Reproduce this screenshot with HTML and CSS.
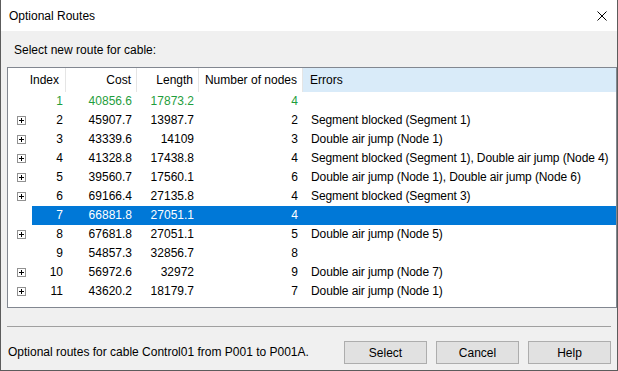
FILE: index.html
```html
<!DOCTYPE html>
<html lang="en">
<head>
    <meta charset="UTF-8">
    <title>Optional Routes</title>
    <link rel="stylesheet" href="styles.css">
</head>
<body>
<div class="window">
    <div class="titlebar">
        <span>Optional Routes</span>
        <svg class="closeIcon" width="10" height="10" viewBox="0 0 10 10"><path d="M0.5 0.5L9.5 9.5M9.5 0.5L0.5 9.5" stroke="#000" stroke-width="1"/></svg>
    </div>
    <div class="dialogBody">
        <p class="prompt">Select new route for cable:</p>
        <div class="routeList">
            <div class="listRow listHeader">
                <div class="hcell hIndex">Index</div>
                <div class="hcell num">Cost</div>
                <div class="hcell num">Length</div>
                <div class="hcell num">Number of nodes</div>
                <div class="hcell hErrors">Errors</div>
            </div>
            <div class="listRow best">
                <div class="exp"></div>
                <div class="cell num idx">1</div><div class="cell num">40856.6</div><div class="cell num">17873.2</div><div class="cell num">4</div><div class="cell err"></div>
            </div>
            <div class="listRow">
                <div class="exp"><svg width="9" height="9"><rect x="0.5" y="0.5" width="8" height="8" fill="#fff" stroke="#919191"/><path d="M2 4.5h5M4.5 2v5" stroke="#000"/></svg></div>
                <div class="cell num idx">2</div><div class="cell num">45907.7</div><div class="cell num">13987.7</div><div class="cell num">2</div><div class="cell err">Segment blocked (Segment 1)</div>
            </div>
            <div class="listRow">
                <div class="exp"><svg width="9" height="9"><rect x="0.5" y="0.5" width="8" height="8" fill="#fff" stroke="#919191"/><path d="M2 4.5h5M4.5 2v5" stroke="#000"/></svg></div>
                <div class="cell num idx">3</div><div class="cell num">43339.6</div><div class="cell num">14109</div><div class="cell num">3</div><div class="cell err">Double air jump (Node 1)</div>
            </div>
            <div class="listRow">
                <div class="exp"><svg width="9" height="9"><rect x="0.5" y="0.5" width="8" height="8" fill="#fff" stroke="#919191"/><path d="M2 4.5h5M4.5 2v5" stroke="#000"/></svg></div>
                <div class="cell num idx">4</div><div class="cell num">41328.8</div><div class="cell num">17438.8</div><div class="cell num">4</div><div class="cell err">Segment blocked (Segment 1), Double air jump (Node 4)</div>
            </div>
            <div class="listRow">
                <div class="exp"><svg width="9" height="9"><rect x="0.5" y="0.5" width="8" height="8" fill="#fff" stroke="#919191"/><path d="M2 4.5h5M4.5 2v5" stroke="#000"/></svg></div>
                <div class="cell num idx">5</div><div class="cell num">39560.7</div><div class="cell num">17560.1</div><div class="cell num">6</div><div class="cell err">Double air jump (Node 1), Double air jump (Node 6)</div>
            </div>
            <div class="listRow">
                <div class="exp"><svg width="9" height="9"><rect x="0.5" y="0.5" width="8" height="8" fill="#fff" stroke="#919191"/><path d="M2 4.5h5M4.5 2v5" stroke="#000"/></svg></div>
                <div class="cell num idx">6</div><div class="cell num">69166.4</div><div class="cell num">27135.8</div><div class="cell num">4</div><div class="cell err">Segment blocked (Segment 3)</div>
            </div>
            <div class="listRow selected">
                <div class="exp"></div>
                <div class="cell num idx">7</div><div class="cell num">66881.8</div><div class="cell num">27051.1</div><div class="cell num">4</div><div class="cell err"></div>
            </div>
            <div class="listRow">
                <div class="exp"><svg width="9" height="9"><rect x="0.5" y="0.5" width="8" height="8" fill="#fff" stroke="#919191"/><path d="M2 4.5h5M4.5 2v5" stroke="#000"/></svg></div>
                <div class="cell num idx">8</div><div class="cell num">67681.8</div><div class="cell num">27051.1</div><div class="cell num">5</div><div class="cell err">Double air jump (Node 5)</div>
            </div>
            <div class="listRow">
                <div class="exp"></div>
                <div class="cell num idx">9</div><div class="cell num">54857.3</div><div class="cell num">32856.7</div><div class="cell num">8</div><div class="cell err"></div>
            </div>
            <div class="listRow">
                <div class="exp"><svg width="9" height="9"><rect x="0.5" y="0.5" width="8" height="8" fill="#fff" stroke="#919191"/><path d="M2 4.5h5M4.5 2v5" stroke="#000"/></svg></div>
                <div class="cell num idx">10</div><div class="cell num">56972.6</div><div class="cell num">32972</div><div class="cell num">9</div><div class="cell err">Double air jump (Node 7)</div>
            </div>
            <div class="listRow">
                <div class="exp"><svg width="9" height="9"><rect x="0.5" y="0.5" width="8" height="8" fill="#fff" stroke="#919191"/><path d="M2 4.5h5M4.5 2v5" stroke="#000"/></svg></div>
                <div class="cell num idx">11</div><div class="cell num">43620.2</div><div class="cell num">18179.7</div><div class="cell num">7</div><div class="cell err">Double air jump (Node 1)</div>
            </div>
        </div>
        <div class="separator"></div>
        <div class="footer">
            <span class="status">Optional routes for cable Control01 from P001 to P001A.</span>
            <div class="buttons">
                <button class="dlgButton">Select</button>
                <button class="dlgButton">Cancel</button>
                <button class="dlgButton">Help</button>
            </div>
        </div>
    </div>
</div>
</body>
</html>
```

FILE: styles.css
```css
*{
    box-sizing: border-box;
}
body{
    margin: 0;
    background-color: #3b3b3b;
    font-family: "Liberation Sans", Arial, sans-serif;
    font-size: 12px;
    color: #000;
}
.window{
    width: 618px;
    height: 371px;
    display: flex;
    flex-direction: column;
    background-color: #f0f0f0;
    border: 1px solid #5c5c5c;
    border-top: none;
}
.titlebar{
    height: 31px;
    flex: none;
    display: flex;
    align-items: center;
    justify-content: space-between;
    padding: 0 10px 0 8px;
    background-color: #fff;
}
.closeIcon{
    display: block;
}
.dialogBody{
    flex: 1;
    display: flex;
    flex-direction: column;
    padding: 12px 0 0 6px;
}
.prompt{
    margin: 0 0 9px 0;
    padding-left: 7px;
    line-height: 15px;
}
.routeList{
    width: 610px;
    height: 241px;
    border: 1px solid #828790;
    background-color: #fff;
}
.listRow{
    display: grid;
    grid-template-columns: 24px 34px 71px 62px 104px 1fr;
    height: 19px;
    line-height: 19px;
}
.listHeader{
    grid-template-columns: 58px 71px 62px 104px 1fr;
    height: 24px;
    line-height: 24px;
}
.hcell{
    border-right: 1px solid #e5e5e5;
    padding-right: 5px;
    white-space: nowrap;
}
.hIndex{
    text-align: right;
    padding-right: 6px;
}
.hErrors{
    border-right: none;
    background-color: #d9ebf9;
    padding-left: 7px;
}
.num{
    text-align: right;
}
.cell{
    padding-right: 5px;
    white-space: nowrap;
}
.idx{
    padding-right: 3px;
}
.err{
    text-align: left;
    padding-left: 8px;
    letter-spacing: -0.1px;
}
.exp{
    display: flex;
    align-items: center;
    padding-left: 9px;
}
.exp svg{
    display: block;
}
.best .cell{
    color: #1f9e3d;
}
.selected .cell{
    background-color: #0078d7;
    color: #fff;
}
.separator{
    width: 604px;
    height: 1px;
    margin-top: 18px;
    background-color: #a0a0a0;
    flex: none;
}
.footer{
    display: flex;
    align-items: flex-start;
    justify-content: space-between;
    width: 604px;
    padding-top: 14px;
}
.status{
    line-height: 23px;
    padding-left: 1px;
}
.buttons{
    display: flex;
    gap: 9px;
}
.dlgButton{
    width: 83px;
    height: 23px;
    margin: 0;
    padding: 0;
    background-color: #e1e1e1;
    border: 1px solid #adadad;
    font-family: inherit;
    font-size: 12px;
    color: #000;
}
```
